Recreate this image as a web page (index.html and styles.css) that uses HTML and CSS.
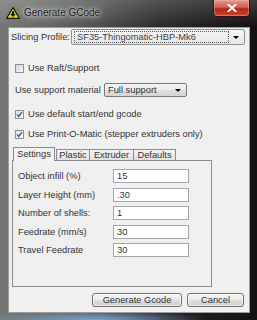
FILE: index.html
```html
<!DOCTYPE html>
<html>
<head>
<meta charset="utf-8">
<link rel="stylesheet" href="styles.css">
</head>
<body>
<div class="window">
  <div class="titlebar">
    <svg class="app-icon" viewBox="0 0 14 12" width="14" height="12">
      <polygon points="7,0.6 13.4,11.4 0.6,11.4" fill="#e9d61c" stroke="#151515" stroke-width="1.1"/>
      <path d="M5.9 4.3h2.2v2.6h1.7l-2.8 3.1-2.8-3.1h1.7z" fill="#151515"/>
    </svg>
    <span class="title">Generate GCode</span>
    <div class="close">
      <svg viewBox="0 0 10 8" width="10" height="8">
        <path d="M1.5 0.8L8.5 7.2M8.5 0.8L1.5 7.2" stroke="#fff" stroke-width="2" stroke-linecap="square"/>
      </svg>
    </div>
  </div>
  <div class="client">
    <div class="profile-row">
      <span class="label">Slicing Profile:</span>
      <div class="combo profile-combo">
        <span class="focus">SF35-Thingomatic-HBP-Mk6</span>
        <span class="arrow-cell"><span class="arrow"></span></span>
      </div>
    </div>

    <div class="check raft">
      <span class="box"></span>
      <span>Use Raft/Support</span>
    </div>

    <div class="support-row">
      <span class="label">Use support material</span>
      <div class="combo support-combo">
        <span class="value">Full support</span>
        <span class="arrow"></span>
      </div>
    </div>

    <div class="check gcode">
      <span class="box checked">
        <svg viewBox="0 0 7 7" width="7" height="7"><path d="M1 3.4L2.8 5.4L6 1.2" fill="none" stroke="#3b4f8c" stroke-width="1.4"/></svg>
      </span>
      <span>Use default start/end gcode</span>
    </div>

    <div class="check pom">
      <span class="box checked">
        <svg viewBox="0 0 7 7" width="7" height="7"><path d="M1 3.4L2.8 5.4L6 1.2" fill="none" stroke="#3b4f8c" stroke-width="1.4"/></svg>
      </span>
      <span>Use Print-O-Matic (stepper extruders only)</span>
    </div>

    <div class="tabs">
      <div class="tab selected tab-settings">Settings</div>
      <div class="tab tab-plastic">Plastic</div>
      <div class="tab tab-extruder">Extruder</div>
      <div class="tab tab-defaults">Defaults</div>
    </div>
    <div class="panel">
      <div class="field-grid">
        <span class="flabel">Object infill (%)</span>
        <div class="input">15</div>
        <span class="flabel">Layer Height (mm)</span>
        <div class="input">.30</div>
        <span class="flabel">Number of shells:</span>
        <div class="input">1</div>
        <span class="flabel">Feedrate (mm/s)</span>
        <div class="input">30</div>
        <span class="flabel">Travel Feedrate</span>
        <div class="input">30</div>
      </div>
    </div>

    <div class="buttons">
      <div class="btn btn-generate">Generate Gcode</div>
      <div class="btn btn-cancel">Cancel</div>
    </div>
  </div>
</div>
</body>
</html>
```

FILE: styles.css
```css
* { box-sizing: border-box; }
html, body { margin: 0; padding: 0; }
body {
  width: 257px;
  height: 320px;
  overflow: hidden;
  font-family: "Liberation Sans", Arial, sans-serif;
  font-size: 9.3px;
  color: #333;
  background: #222;
}

.window {
  width: 257px;
  height: 320px;
  display: flex;
  flex-direction: column;
  padding: 0 7px 7px 8px;
  background:
    linear-gradient(to bottom, rgba(255,255,255,0.18), rgba(255,255,255,0) 26px),
    radial-gradient(ellipse 110px 10px at 95px 320px, rgba(130,180,230,0.85), rgba(130,180,230,0)),
    linear-gradient(to right, #747774 0%, #666966 18%, #4c4d4c 40%, #2c2c2c 62%, #1c1c1c 82%, #121212 100%);
}

/* title bar */
.titlebar {
  height: 27px;
  margin: 0 -7px 0 -8px;
  display: flex;
  align-items: flex-start;
}
.app-icon {
  margin: 7px 0 0 6px;
  flex: none;
}
.title {
  margin: 6px 0 0 4px;
  font-size: 10px;
  line-height: 13px;
  color: #1a1a1a;
  text-shadow: 0 0 8px rgba(220,220,220,0.95), 0 0 4px rgba(220,220,220,0.9), 0 0 2px rgba(220,220,220,0.8);
}
.close {
  margin-left: auto;
  margin-right: 7px;
  width: 37px;
  height: 17px;
  border: 1px solid #3a1010;
  border-top: none;
  border-radius: 0 0 4px 4px;
  background: linear-gradient(to bottom, #e79a8a 0%, #d0604c 45%, #b3281a 55%, #c9472e 100%);
  display: flex;
  align-items: center;
  justify-content: center;
  box-shadow: inset 0 0 0 1px rgba(255,200,190,0.35);
}

/* client area */
.client {
  flex: 1;
  background: #f0f0f0;
  border: 1px solid #9a9c9e;
  display: flex;
  flex-direction: column;
  padding: 1px 0 0 0;
}

.profile-row {
  display: flex;
  align-items: center;
  height: 16px;
  padding-left: 2px;
}
.profile-row .label { width: 60px; }

.combo {
  display: flex;
  align-items: center;
  border: 1px solid #8d8f94;
  border-radius: 2px;
}
.profile-combo {
  width: 174px;
  height: 16px;
  padding: 1px 1px 1px 2px;
  background: linear-gradient(to bottom, #f6f6f6, #e6e6e6);
}
.focus {
  flex: 1;
  height: 12px;
  border: 1px dotted #555;
  padding-left: 2px;
  line-height: 10px;
  color: #3a3f4a;
}
.arrow-cell {
  width: 14px;
  display: flex;
  justify-content: center;
}
.arrow {
  width: 0;
  height: 0;
  border-left: 3px solid transparent;
  border-right: 3px solid transparent;
  border-top: 3px solid #000;
}

.check {
  display: flex;
  align-items: center;
  height: 12px;
  padding-left: 6px;
  gap: 4px;
}
.raft { margin-top: 17px; }
.gcode { margin-top: 11px; }
.pom { margin-top: 8px; }

.box {
  width: 9px;
  height: 9px;
  border: 1px solid #8e8f8f;
  background: linear-gradient(135deg, #d4d4d4, #f7f7f7);
  display: flex;
  align-items: center;
  justify-content: center;
  flex: none;
}
.box.checked {
  background: linear-gradient(135deg, #dfe3f0, #f7f8fc);
}

.support-row {
  display: flex;
  align-items: center;
  margin-top: 9px;
  height: 14px;
  padding-left: 6px;
}
.support-row .label { width: 89px; }
.support-combo {
  width: 83px;
  height: 14px;
  border-color: #7a7a7a;
  padding: 0 5px 0 3px;
  background: linear-gradient(to bottom, #f4f4f4 0%, #ececec 50%, #dedede 51%, #d4d4d4 100%);
}
.support-combo .value { flex: 1; }

/* tabs */
.tabs {
  display: flex;
  align-items: flex-end;
  height: 13px;
  margin-top: 7px;
  padding-left: 4px;
}
.tab {
  height: 11px;
  border: 1px solid #898c95;
  border-bottom: none;
  background: linear-gradient(to bottom, #f4f4f4, #e2e2e2);
  display: flex;
  align-items: center;
  justify-content: center;
  line-height: 9px;
}
.tab.selected {
  height: 14px;
  margin-bottom: -1px;
  background: #f2f2f2;
  position: relative;
  z-index: 1;
}
.tab-settings { width: 42px; }
.tab-plastic { width: 34px; margin-left: 1px; }
.tab-extruder { width: 45px; margin-left: -1px; }
.tab-defaults { width: 43px; margin-left: -1px; }

.panel {
  width: 200px;
  height: 127px;
  margin-left: 3px;
  border: 1px solid #898c95;
  background: #efefef;
  padding: 8px 0 0 5px;
}
.field-grid {
  display: grid;
  grid-template-columns: 95px 76px;
  grid-auto-rows: 14px;
  row-gap: 4.5px;
  align-items: center;
}
.input {
  height: 14px;
  border: 1px solid #a4a6ab;
  background: #fff;
  padding-left: 3px;
  line-height: 12px;
}

/* buttons */
.buttons {
  display: flex;
  justify-content: flex-end;
  gap: 5px;
  margin-top: 6px;
  padding-right: 5px;
}
.btn {
  height: 14px;
  border: 1px solid #707070;
  border-radius: 3px;
  background: linear-gradient(to bottom, #f4f4f4 0%, #ebebeb 50%, #dddddd 51%, #cfcfcf 100%);
  display: flex;
  align-items: center;
  justify-content: center;
  box-shadow: inset 0 0 0 1px rgba(255,255,255,0.6);
}
.btn-generate { width: 90px; }
.btn-cancel { width: 57px; }
```
